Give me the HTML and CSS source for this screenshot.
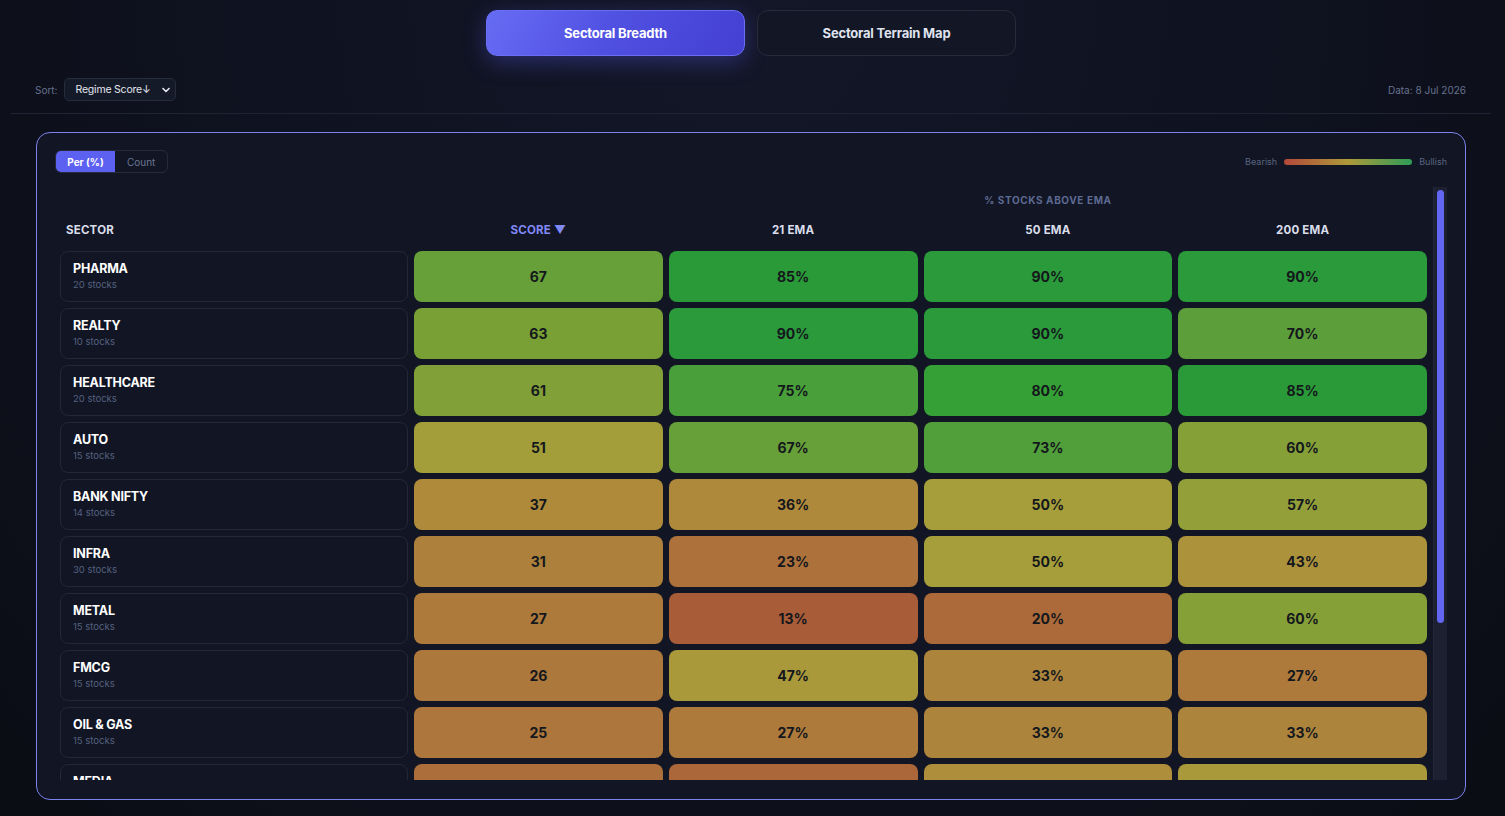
FILE: index.html
```html
<!DOCTYPE html>
<html>
  <head>
    <title>Sectoral Breadth</title>
    <link rel="stylesheet" href="styles.css">
  </head>
  <body>
    <div class="page">
      <div class="tabs">
        <button class="tab active">Sectoral Breadth</button>
        <button class="tab">Sectoral Terrain Map</button>
      </div>

      <div class="toolbar">
        <div class="sort">
          <span class="muted">Sort:</span>
          <div class="select">
            <span>Regime Score&#8595;</span>
            <svg width="10" height="10" viewBox="0 0 10 10"><path d="M2 3.5 L5 6.5 L8 3.5" fill="none" stroke="#e6e8f0" stroke-width="1.6" stroke-linecap="round" stroke-linejoin="round"/></svg>
          </div>
        </div>
        <span class="muted">Data: 8 Jul 2026</span>
      </div>

      <div class="card">
        <div class="card-top">
          <div class="toggle">
            <span class="toggle-btn on">Per (%)</span>
            <span class="toggle-btn">Count</span>
          </div>
          <div class="legend">
            <span>Bearish</span>
            <span class="legend-bar"></span>
            <span>Bullish</span>
          </div>
        </div>

        <div class="scroller">
          <div class="viewport">
            <div class="heatmap" id="heatmap">
              <div class="group-head">% STOCKS ABOVE EMA</div>
              <div class="col-head left">SECTOR</div>
              <div class="col-head sorted">SCORE &#9660;</div>
              <div class="col-head">21 EMA</div>
              <div class="col-head">50 EMA</div>
              <div class="col-head">200 EMA</div>
            </div>
          </div>
          <div class="track"><div class="thumb"></div></div>
        </div>
      </div>
    </div>

    <script>
      // sector, stocks, score, ema21, ema50, ema200
      const sectors = [
        ["PHARMA", 20, 67, 85, 90, 90],
        ["REALTY", 10, 63, 90, 90, 70],
        ["HEALTHCARE", 20, 61, 75, 80, 85],
        ["AUTO", 15, 51, 67, 73, 60],
        ["BANK NIFTY", 14, 37, 36, 50, 57],
        ["INFRA", 30, 31, 23, 50, 43],
        ["METAL", 15, 27, 13, 20, 60],
        ["FMCG", 15, 26, 47, 33, 27],
        ["OIL & GAS", 15, 25, 27, 33, 33],
        ["MEDIA", 10, 22, 18, 40, 47],
        ["IT", 10, 20, 10, 30, 40],
        ["ENERGY", 15, 18, 13, 27, 33],
        ["PSU BANK", 12, 15, 8, 25, 42]
      ];

      // value -> rgb stops (red -> amber -> green)
      const stops = [
        [0, 168, 62, 56],
        [13, 169, 92, 56],
        [20, 172, 106, 58],
        [25, 173, 118, 60],
        [33, 173, 132, 60],
        [37, 174, 138, 58],
        [43, 173, 146, 60],
        [50, 166, 158, 58],
        [57, 147, 160, 58],
        [63, 120, 160, 53],
        [70, 91, 158, 58],
        [75, 73, 160, 58],
        [80, 53, 160, 53],
        [85, 42, 154, 56],
        [100, 42, 154, 64]
      ];

      function heatColor(v) {
        for (let i = 1; i < stops.length; i++) {
          const a = stops[i - 1];
          const b = stops[i];
          if (v <= b[0]) {
            const t = (v - a[0]) / (b[0] - a[0]);
            const c = [1, 2, 3].map((k) => Math.round(a[k] + (b[k] - a[k]) * t));
            return `rgb(${c[0]}, ${c[1]}, ${c[2]})`;
          }
        }
        return "rgb(42, 154, 64)";
      }

      const grid = document.getElementById("heatmap");

      for (const [name, count, ...values] of sectors) {
        const cell = document.createElement("div");
        cell.className = "sector";
        cell.innerHTML = `<span class="sector-name">${name.replace("&", "&amp;")}</span><span class="sector-count">${count} stocks</span>`;
        grid.appendChild(cell);

        values.forEach((v, i) => {
          const box = document.createElement("div");
          box.className = "heat";
          box.style.background = heatColor(v);
          box.textContent = i === 0 ? v : v + "%";
          grid.appendChild(box);
        });
      }
    </script>
  </body>
</html>
```

FILE: styles.css
```css
* {
  box-sizing: border-box;
}

body {
  margin: 0;
  height: 816px;
  overflow: hidden;
  font-family: 'Inter', 'Noto Sans', sans-serif;
  color: #e6e8f0;
  background: radial-gradient(ellipse at 50% 0%, #141728 0%, #0f1220 45%, #0b0d15 100%);
}

.page {
  margin: 0 14px 0 11px;
  padding-top: 10px;
}

/* top tabs */
.tabs {
  display: flex;
  justify-content: center;
  gap: 12px;
}

.tab {
  width: 259px;
  height: 46px;
  border-radius: 11px;
  border: 1px solid #262b3b;
  background: #121625;
  color: #dfe2ee;
  font-family: inherit;
  font-size: 13px;
  font-weight: 700;
  letter-spacing: -0.2px;
}

.tab.active {
  border-color: #6a6ef5;
  background: linear-gradient(120deg, #676cf4 0%, #4f4fe0 50%, #4340d2 100%);
  color: #fff;
  box-shadow: 0 6px 22px rgba(90, 92, 240, 0.35);
}

/* sort row */
.toolbar {
  display: flex;
  justify-content: space-between;
  align-items: center;
  margin-top: 22px;
  padding: 0 25px 12px 24px;
  border-bottom: 1px solid #1f2333;
}

.sort {
  display: flex;
  align-items: center;
  gap: 6px;
}

.muted {
  font-size: 10px;
  color: #66708c;
}

.select {
  display: flex;
  align-items: center;
  justify-content: space-between;
  width: 112px;
  height: 23px;
  padding: 0 4px 0 11px;
  border: 1px solid #272c3d;
  border-radius: 5px;
  background: #151a29;
  font-size: 10.5px;
  color: #e3e6ef;
  letter-spacing: -0.2px;
}

/* main card */
.card {
  margin: 18px 25px 0;
  height: 668px;
  padding: 17px 18px 19px 17px;
  border: 1px solid #7b82ec;
  border-radius: 14px;
  background: #121524;
}

.card-top {
  display: flex;
  justify-content: space-between;
  align-items: center;
  height: 23px;
  padding-left: 1px;
}

.toggle {
  display: flex;
  height: 23px;
  border: 1px solid #262b3c;
  border-radius: 6px;
  overflow: hidden;
}

.toggle-btn {
  display: flex;
  align-items: center;
  padding: 0 12px;
  font-size: 10px;
  color: #6b7591;
}

.toggle-btn.on {
  width: 59px;
  justify-content: center;
  padding: 0;
  background: #5d61f2;
  color: #fff;
  font-weight: 700;
}

.legend {
  display: flex;
  align-items: center;
  gap: 7px;
  font-size: 9px;
  color: #5b6580;
}

.legend-bar {
  width: 128px;
  height: 6px;
  border-radius: 3px;
  background: linear-gradient(90deg, #b4483a 0%, #ad9a3a 50%, #2e9c58 100%);
}

/* heatmap table */
.scroller {
  display: flex;
  margin-top: 14px;
  height: 593px;
}

.viewport {
  flex: 1;
  overflow: hidden;
}

.track {
  width: 14px;
  padding: 3px;
  background: #1c2030;
  border-left: 1px solid #232838;
}

.thumb {
  height: 433px;
  border-radius: 4px;
  background: #6366f1;
}

.heatmap {
  display: grid;
  grid-template-columns: 348px repeat(4, 1fr);
  grid-auto-rows: 51px;
  grid-template-rows: 14px 32px;
  gap: 6px;
  padding: 6px;
}

.group-head {
  grid-column: 3 / 6;
  text-align: center;
  font-size: 10px;
  font-weight: 700;
  letter-spacing: 0.6px;
  color: #5d6a92;
  line-height: 14px;
}

.col-head {
  display: flex;
  align-items: center;
  justify-content: center;
  padding-top: 2px;
  font-size: 11.5px;
  font-weight: 700;
  color: #d9ddea;
  letter-spacing: 0.2px;
}

.col-head.left {
  grid-column: 1;
  justify-content: flex-start;
  padding-left: 6px;
}

.col-head.sorted {
  grid-column: 2;
  color: #8189f5;
}

.sector {
  display: flex;
  flex-direction: column;
  justify-content: center;
  gap: 3px;
  padding: 0 12px 2px;
  border: 1px solid #232839;
  border-radius: 8px;
  background: #111524;
}

.sector-name {
  font-size: 12.5px;
  font-weight: 700;
  color: #fff;
  letter-spacing: -0.2px;
}

.sector-count {
  font-size: 9.5px;
  color: #56617f;
}

.heat {
  display: flex;
  align-items: center;
  justify-content: center;
  border-radius: 8px;
  font-size: 14px;
  font-weight: 700;
  color: #14171c;
}
```
